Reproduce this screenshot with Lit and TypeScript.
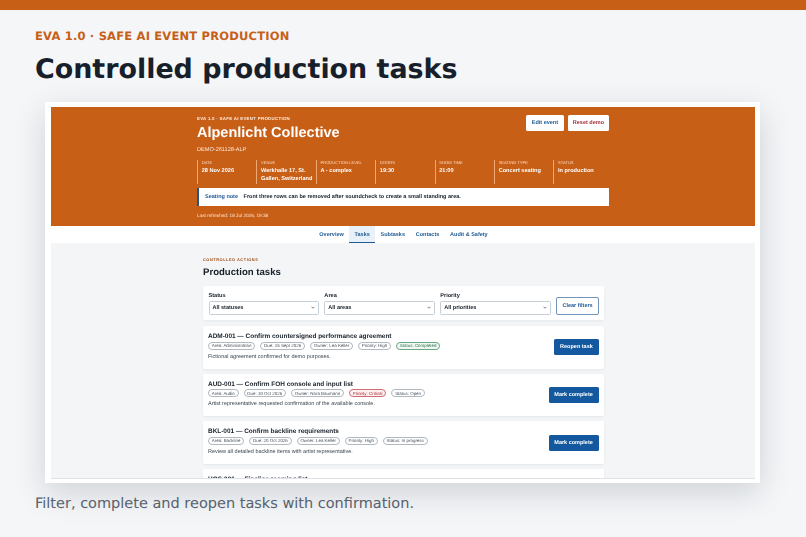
import { LitElement, html, css } from "lit";
import { customElement } from "lit/decorators.js";

const meta = [
  ["DATE", "28 Nov 2026"],
  ["VENUE", "Werkhalle 17, St. Gallen, Switzerland"],
  ["PRODUCTION LEVEL", "A - complex"],
  ["DOORS", "19:30"],
  ["SHOW TIME", "21:00"],
  ["SEATING TYPE", "Concert seating"],
  ["STATUS", "In production"],
];

type Chip = [string, string?];
const tasks: { title: string; chips: Chip[]; desc: string; action: string }[] = [
  {
    title: "ADM-001 — Confirm countersigned performance agreement",
    chips: [["Area: Administration"], ["Due: 15 Sept 2026"], ["Owner: Lea Keller"], ["Priority: High"], ["Status: Completed", "green"]],
    desc: "Fictional agreement confirmed for demo purposes.",
    action: "Reopen task",
  },
  {
    title: "AUD-001 — Confirm FOH console and input list",
    chips: [["Area: Audio"], ["Due: 30 Oct 2026"], ["Owner: Nora Baumann"], ["Priority: Critical", "red"], ["Status: Open"]],
    desc: "Artist representative requested confirmation of the available console.",
    action: "Mark complete",
  },
  {
    title: "BKL-001 — Confirm backline requirements",
    chips: [["Area: Backline"], ["Due: 20 Oct 2026"], ["Owner: Lea Keller"], ["Priority: High"], ["Status: In progress"]],
    desc: "Review all detailed backline items with artist representative.",
    action: "Mark complete",
  },
];

@customElement("app-root")
export class AppRoot extends LitElement {
  static styles = css`
    :host {
      display: block;
      width: 806px;
      height: 537px;
      overflow: hidden;
      background: #f4f6f8;
      font-family: "Liberation Sans", Arial, sans-serif;
      text-rendering: geometricPrecision;
    }
    .topbar { height: 10px; background: #c85f17; }
    .head { padding: 18.5px 35px 0; font-family: "DejaVu Sans", sans-serif; }
    .kicker { font-size: 11.5px; line-height: 14px; font-weight: 700; letter-spacing: 0.2px; color: #c85f17; }
    h1 { margin: 9.5px 0 0; font-size: 26.9px; line-height: 36px; font-weight: 700; color: #17202a; }
    .frame {
      margin: 14px 0 0 45px;
      width: 715px;
      height: 381px;
      background: #fff;
      box-shadow: 0 10px 30px rgba(23, 32, 42, 0.16);
      overflow: hidden;
    }
    .inner {
      height: 100%;
      box-sizing: border-box;
      padding: 5px 5px 4px 6px;
      display: flex;
      flex-direction: column;
      filter: blur(0.35px);
    }
    .hero {
      flex: none;
      height: 119px;
      box-sizing: border-box;
      background: #c85f17;
      color: #fff;
      padding: 9px 146px 0;
    }
    .hero-top { display: flex; justify-content: space-between; align-items: flex-start; }
    .hero-eyebrow { font-size: 4.4px; line-height: 5px; font-weight: 700; letter-spacing: 0.28px; color: #ffe9d8; }
    .hero-title { margin-top: 4px; font-size: 14.5px; line-height: 17px; font-weight: 700; }
    .hero-id { margin-top: 3.5px; font-size: 5.6px; line-height: 8px; color: #fde6d5; }
    .hero-btns { display: flex; gap: 4px; margin-top: -1px; }
    .hbtn {
      height: 16px; padding: 0 5px; display: flex; align-items: center;
      background: #fff; border-radius: 1.5px;
      font-size: 5.5px; font-weight: 700; color: #1f5a96;
    }
    .hbtn.edit { padding: 0 5.8px; }
    .hbtn.red { color: #a8303c; }
    .meta { display: grid; grid-template-columns: repeat(7, 59.4px); margin-top: 6px; width: 412px; }
    .meta > div {
      height: 24px;
      border-left: 0.7px solid #eda873;
      padding-left: 3.7px;
      box-sizing: border-box;
    }
    .meta .l { font-size: 4.1px; line-height: 5px; margin-top: 0.5px; color: #fbdcc6; }
    .meta .v { font-size: 5.6px; line-height: 8px; margin-top: 1.5px; font-weight: 700; color: #fff; padding-right: 2px; }
    .note {
      width: 412px; height: 18px; margin-top: 4px; box-sizing: border-box;
      background: #fff; border-left: 2px solid #28567f;
      display: flex; align-items: center; gap: 5.5px; padding-left: 6px;
      font-size: 5.5px; font-weight: 700; color: #17202a;
    }
    .note b { color: #1f5a96; }
    .refreshed { margin-top: 6px; font-size: 4.7px; line-height: 7px; color: #fde6d5; }
    .tabs {
      flex: none; height: 17px; display: flex; justify-content: center;
      background: #fff; font-size: 5.5px; font-weight: 700; color: #1f5a96;
      padding-left: 1px;
    }
    .tab { padding: 0 5.4px; display: flex; align-items: center; }
    .tab.on { background: #e9f1f8; box-shadow: inset 0 -1px 0 #1f5a96; }
    .content { flex: 1; min-height: 0; overflow: hidden; background: #f3f5f7; padding: 14px 151px 0 152px; border-bottom: 0.7px solid #dfe3e7; }
    .c-kicker { font-size: 3.9px; line-height: 5px; font-weight: 700; letter-spacing: 0.55px; color: #a14a12; }
    h2 { margin: 4.5px 0 0; font-size: 9.6px; line-height: 12px; font-weight: 700; color: #17202a; }
    .card { background: #fff; border-radius: 2px; box-shadow: 0 1px 3px rgba(23, 32, 42, 0.06); }
    .filters { margin-top: 7.5px; height: 34px; box-sizing: border-box; padding: 5px 5px 0 5.5px; display: flex; align-items: flex-start; gap: 5px; }
    .f { width: 111px; display: flex; flex-direction: column; }
    .f label { font-size: 5.6px; line-height: 7px; color: #17202a; font-weight: 700; margin-top: 1.5px; }
    .sel {
      margin-top: 1.5px; height: 13.5px; box-sizing: border-box;
      border: 0.7px solid #c6ced6; border-radius: 1.5px; background: #fff;
      display: flex; align-items: center; justify-content: space-between; padding: 0 3px;
      font-size: 5.5px; font-weight: 700; color: #17202a;
    }
    .sel svg { width: 4px; height: 3px; }
    .clear {
      margin-top: 6px; width: 43px; height: 18px; box-sizing: border-box;
      border: 0.7px solid #6f94b8; border-radius: 2px; background: #fff;
      display: flex; align-items: center; justify-content: center;
      font-size: 5.5px; font-weight: 700; color: #1f5a96;
    }
    .tasklist { margin-top: 6px; display: flex; flex-direction: column; gap: 5px; }
    .task { height: 42.7px; flex: none; box-sizing: border-box; padding: 7px 5.5px 0 5px; display: flex; justify-content: space-between; align-items: center; }
    .task-main { align-self: flex-start; }
    .t { font-size: 6.45px; line-height: 8px; font-weight: 700; color: #17202a; }
    .chips { display: flex; gap: 5px; margin-top: 0.5px; }
    .chip {
      height: 8px; box-sizing: border-box; padding: 0 2.8px; border-radius: 4px;
      border: 0.6px solid #b0b8c0; display: flex; align-items: center;
      font-size: 4.45px; color: #46505a; white-space: nowrap;
    }
    .chip.green { border-color: #6aa883; color: #2a7346; background: #f2f9f5; }
    .chip.red { border-color: #d06a73; color: #b3242f; background: #fdf3f4; }
    .d { margin-top: 4.3px; font-size: 5.5px; line-height: 7px; color: #3c4650; }
    .act {
      height: 16px; padding: 0 5.7px; margin-top: -7px; flex: none; border-radius: 1.5px;
      display: flex; align-items: center; background: #14599f;
      font-size: 5.5px; font-weight: 700; color: #fff;
    }
    .caption { margin: 12px 0 0 35px; font-family: "DejaVu Sans", sans-serif; font-size: 14.5px; line-height: 18px; color: #56616d; }
  `;

  render() {
    const chev = html`<svg viewBox="0 0 8 6"><path d="M1 1.5l3 3 3-3" fill="none" stroke="#333" stroke-width="1.2"/></svg>`;
    return html`
      <div class="topbar"></div>
      <div class="head">
        <div class="kicker">EVA 1.0 · SAFE AI EVENT PRODUCTION</div>
        <h1>Controlled production tasks</h1>
      </div>
      <div class="frame">
        <div class="inner">
          <div class="hero">
            <div class="hero-top">
              <div>
                <div class="hero-eyebrow">EVA 1.0 · SAFE AI EVENT PRODUCTION</div>
                <div class="hero-title">Alpenlicht Collective</div>
                <div class="hero-id">DEMO-261128-ALP</div>
              </div>
              <div class="hero-btns">
                <div class="hbtn edit">Edit event</div>
                <div class="hbtn red">Reset demo</div>
              </div>
            </div>
            <div class="meta">
              ${meta.map(([l, v]) => html`<div><div class="l">${l}</div><div class="v">${v}</div></div>`)}
            </div>
            <div class="note"><b>Seating note</b><span>Front three rows can be removed after soundcheck to create a small standing area.</span></div>
            <div class="refreshed">Last refreshed: 18 Jul 2026, 19:38</div>
          </div>
          <div class="tabs">
            <div class="tab">Overview</div>
            <div class="tab on">Tasks</div>
            <div class="tab">Subtasks</div>
            <div class="tab">Contacts</div>
            <div class="tab">Audit &amp; Safety</div>
          </div>
          <div class="content">
            <div class="c-kicker">CONTROLLED ACTIONS</div>
            <h2>Production tasks</h2>
            <div class="card filters">
              <div class="f"><label>Status</label><div class="sel">All statuses ${chev}</div></div>
              <div class="f"><label>Area</label><div class="sel">All areas ${chev}</div></div>
              <div class="f"><label>Priority</label><div class="sel">All priorities ${chev}</div></div>
              <div class="clear">Clear filters</div>
            </div>
            <div class="tasklist">
              ${tasks.map(
                (t) => html`<div class="card task">
                  <div class="task-main">
                    <div class="t">${t.title}</div>
                    <div class="chips">${t.chips.map(([c, k]) => html`<div class="chip ${k ?? ""}">${c}</div>`)}</div>
                    <div class="d">${t.desc}</div>
                  </div>
                  <div class="act">${t.action}</div>
                </div>`
              )}
              <div class="card task"><div class="task-main"><div class="t">HOS-001 — Finalise rooming list</div></div></div>
            </div>
          </div>
        </div>
      </div>
      <div class="caption">Filter, complete and reopen tasks with confirmation.</div>
    `;
  }
}
